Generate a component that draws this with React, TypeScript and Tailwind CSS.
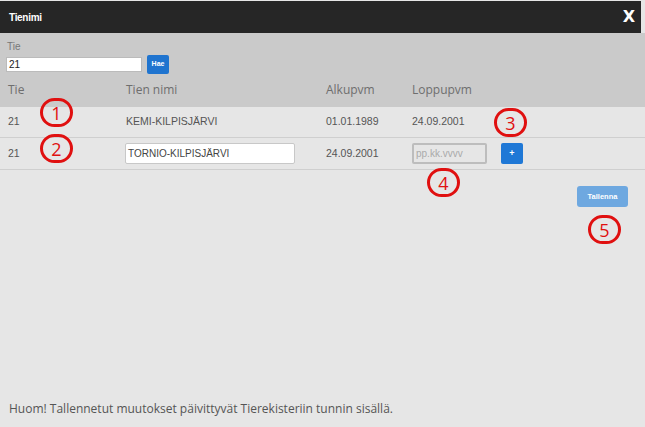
import React from "react";

const Marker = ({ n, className }: { n: number; className: string }) => (
  <div
    className={`absolute w-[33px] h-[29px] rounded-full border-[3px] border-[#e01010] flex items-center justify-center text-[#e01010] text-[18px] leading-none font-['Open_Sans',sans-serif] ${className}`}
  >
    {n}
  </div>
);

const App = () => {
  return (
    <div className="relative w-[645px] h-[427px] bg-[#e6e6e6] flex flex-col font-['Liberation_Sans',Arial,sans-serif] overflow-hidden">
      {/* title bar */}
      <div className="mt-[1px] h-[32px] mr-[4px] bg-[#262626] flex items-center justify-between pl-[9px] pr-[6px]">
        <span className="text-white text-[10px] font-bold tracking-[-0.3px]">Tienimi</span>
        <span className="text-white text-[16px] font-black leading-none font-['DejaVu_Sans',sans-serif]">X</span>
      </div>

      {/* search + headers */}
      <div className="bg-[#cacaca] h-[74px] flex flex-col px-[6px] pt-[9px]">
        <span className="text-[10px] text-[#777] leading-none pl-[1px]">Tie</span>
        <div className="flex items-center gap-[5px] mt-[3px]">
          <div className="w-[136px] h-[15px] bg-white border border-[#bbb] flex items-center px-[2px] text-[10px] text-[#222]">
            21
          </div>
          <button className="w-[22px] h-[19px] rounded-[2px] bg-[#1f74cf] text-white text-[7px] font-bold">Hae</button>
        </div>
        <div className="grid grid-cols-[118px_200px_86px_89px_1fr] mt-[7px] text-[12px] text-[#6e6e6e] font-['Open_Sans',sans-serif] pl-[2px]">
          <span>Tie</span>
          <span>Tien nimi</span>
          <span>Alkupvm</span>
          <span>Loppupvm</span>
        </div>
      </div>

      {/* rows */}
      <div className="grid grid-cols-[118px_200px_86px_89px_1fr] items-center h-[31px] pl-[8px] border-b border-[#cfcfcf] text-[10.5px] text-[#555]">
        <span>21</span>
        <span>KEMI-KILPISJÄRVI</span>
        <span>01.01.1989</span>
        <span>24.09.2001</span>
      </div>
      <div className="grid grid-cols-[117px_201px_86px_89px_1fr] items-center h-[32px] pl-[8px] border-b border-[#cfcfcf] text-[10.5px] text-[#555]">
        <span>21</span>
        <div className="w-[170px] h-[21px] bg-white border border-[#c8c8c8] rounded-[2px] flex items-center px-[2px] text-[#444] text-[10px]">
          TORNIO-KILPISJÄRVI
        </div>
        <span>24.09.2001</span>
        <div className="w-[75px] h-[21px] border-[2px] border-[#bdbdbd] rounded-[2px] flex items-center px-[2px] text-[10px] text-[#aaa]">
          pp.kk.vvvv
        </div>
        <div>
          <button className="w-[22px] h-[21px] rounded-[2px] bg-[#1f78d6] text-white text-[9px] font-bold leading-none">+</button>
        </div>
      </div>

      <div className="flex justify-end pr-[17px] mt-[16px]">
        <button className="w-[51px] h-[21px] rounded-[3px] bg-[#6ea8e0] text-white text-[7.5px] font-bold">Tallenna</button>
      </div>

      <div className="mt-auto mb-[9px] pl-[9px] text-[12px] text-[#555] font-['Open_Sans',sans-serif]">
        Huom! Tallennetut muutokset päivittyvät Tierekisteriin tunnin sisällä.
      </div>

      {/* annotation markers */}
      <Marker n={1} className="left-[40px] top-[98px]" />
      <Marker n={2} className="left-[40px] top-[134px]" />
      <Marker n={3} className="left-[494px] top-[108px]" />
      <Marker n={4} className="left-[427px] top-[168px]" />
      <Marker n={5} className="left-[588px] top-[215px]" />
    </div>
  );
};

export default App;
